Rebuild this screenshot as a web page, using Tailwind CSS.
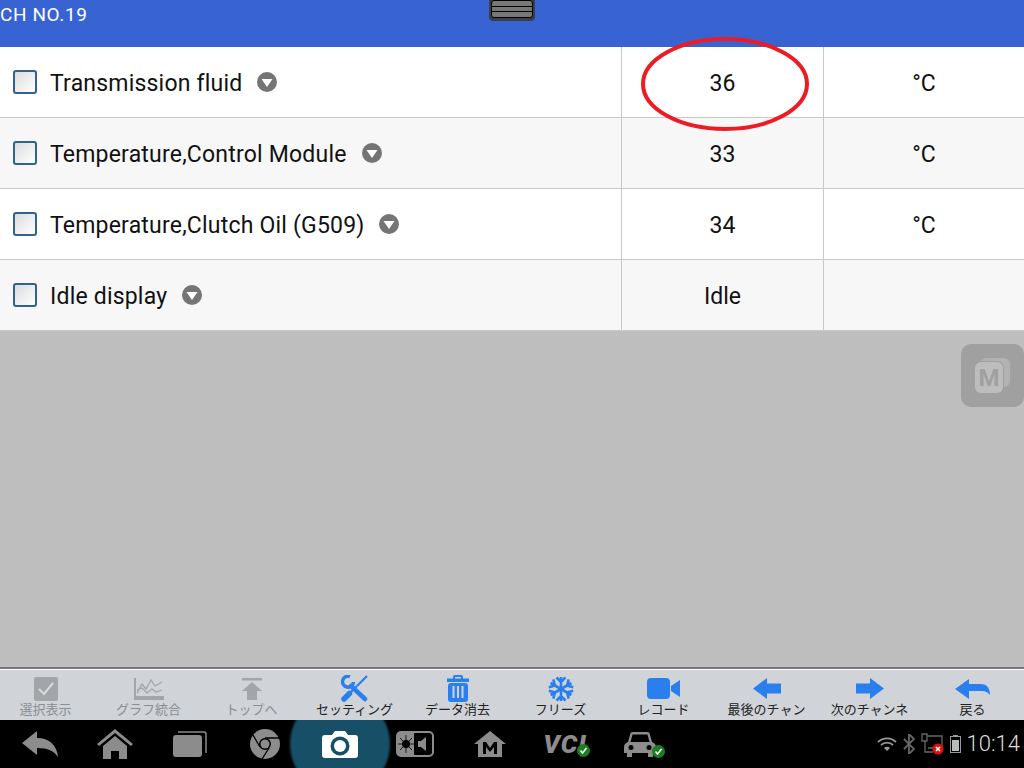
<!DOCTYPE html>
<html lang="en">
<head>
  <meta charset="UTF-8" />
  <title>CH NO.19</title>
  <script src="https://cdn.jsdelivr.net/npm/@tailwindcss/browser@4"></script>
</head>
<body class="w-[1024px] h-[768px] overflow-hidden bg-[#bebebe] font-['Roboto',sans-serif] relative flex flex-col">
  <!-- header -->
  <div class="h-[47px] bg-[#3763d3] text-white text-[19px] leading-[30px] tracking-[0.6px]">CH NO.19</div>

  <!-- rows -->
  <div class="text-[23px] text-[#111]">
    <div class="h-[71px] grid grid-cols-[622px_202px_200px] bg-white border-b border-[#c8c8c8]">
      <div class="flex items-center border-r border-[#c8c8c8] pl-[13px]">
        <span class="w-[24px] h-[24px] rounded-[3px] border-2 border-[#2f6391] bg-gradient-to-br from-[#dcdcdc] to-white"></span>
        <span class="ml-[13px] pt-[4px] tracking-[0.2px]">Transmission fluid</span>
        <svg class="ml-[15px]" width="20" height="20" viewBox="0 0 20 20"><circle cx="10" cy="10" r="10" fill="#757575"/><path d="M4.5 7h11L10 15z" fill="#fff"/></svg>
      </div>
      <div class="flex items-center justify-center border-r border-[#c8c8c8] pt-[4px]">36</div>
      <div class="flex items-center justify-center pt-[4px]">°C</div>
    </div>
    <div class="h-[71px] grid grid-cols-[622px_202px_200px] bg-[#f7f7f7] border-b border-[#c8c8c8]">
      <div class="flex items-center border-r border-[#c8c8c8] pl-[13px]">
        <span class="w-[24px] h-[24px] rounded-[3px] border-2 border-[#2f6391] bg-gradient-to-br from-[#dcdcdc] to-white"></span>
        <span class="ml-[13px] pt-[4px] tracking-[0.2px]">Temperature,Control Module</span>
        <svg class="ml-[15px]" width="20" height="20" viewBox="0 0 20 20"><circle cx="10" cy="10" r="10" fill="#757575"/><path d="M4.5 7h11L10 15z" fill="#fff"/></svg>
      </div>
      <div class="flex items-center justify-center border-r border-[#c8c8c8] pt-[4px]">33</div>
      <div class="flex items-center justify-center pt-[4px]">°C</div>
    </div>
    <div class="h-[71px] grid grid-cols-[622px_202px_200px] bg-white border-b border-[#c8c8c8]">
      <div class="flex items-center border-r border-[#c8c8c8] pl-[13px]">
        <span class="w-[24px] h-[24px] rounded-[3px] border-2 border-[#2f6391] bg-gradient-to-br from-[#dcdcdc] to-white"></span>
        <span class="ml-[13px] pt-[4px] tracking-[0.2px]">Temperature,Clutch Oil (G509)</span>
        <svg class="ml-[15px]" width="20" height="20" viewBox="0 0 20 20"><circle cx="10" cy="10" r="10" fill="#757575"/><path d="M4.5 7h11L10 15z" fill="#fff"/></svg>
      </div>
      <div class="flex items-center justify-center border-r border-[#c8c8c8] pt-[4px]">34</div>
      <div class="flex items-center justify-center pt-[4px]">°C</div>
    </div>
    <div class="h-[71px] grid grid-cols-[622px_202px_200px] bg-[#f7f7f7] border-b border-[#c8c8c8]">
      <div class="flex items-center border-r border-[#c8c8c8] pl-[13px]">
        <span class="w-[24px] h-[24px] rounded-[3px] border-2 border-[#2f6391] bg-gradient-to-br from-[#dcdcdc] to-white"></span>
        <span class="ml-[13px] pt-[4px] tracking-[0.2px]">Idle display</span>
        <svg class="ml-[15px]" width="20" height="20" viewBox="0 0 20 20"><circle cx="10" cy="10" r="10" fill="#757575"/><path d="M4.5 7h11L10 15z" fill="#fff"/></svg>
      </div>
      <div class="flex items-center justify-center border-r border-[#c8c8c8] pt-[4px]">Idle</div>
      <div></div>
    </div>
  </div>

  <div class="flex-1"></div>

  <!-- toolbar -->
  <div class="h-[53px] border-t-2 border-[#77777b] bg-[#d0d3d7] shadow-[inset_0_1px_0_#fff] grid grid-cols-[97px_repeat(9,103px)] pt-[6px] text-[13px] leading-[13px] font-['Noto_Sans_CJK_JP',sans-serif] text-[#222]">
    <div class="flex flex-col items-center pr-[6px] text-[#8b8e91]">
      <div class="h-[27px] flex items-center"><svg width="24" height="24" viewBox="0 0 24 24"><rect width="24" height="24" rx="2" fill="#a3a5a8"/><path d="M5 12l5 5 9-11" fill="none" stroke="#d8dadc" stroke-width="2"/></svg></div>
      <span>選択表示</span>
    </div>
    <div class="flex flex-col items-center text-[#8b8e91]">
      <div class="h-[27px] flex items-center"><svg width="30" height="22" viewBox="0 0 30 22"><path d="M0 0h2v18h28v4H0z" fill="#a3a5a8"/><path d="M3 15l5-9 4 5 5-9 4 6 7-4M3 12l5-2 5 5 5-4 4 3 6-2" fill="none" stroke="#a3a5a8" stroke-width="1.3"/></svg></div>
      <span>グラフ統合</span>
    </div>
    <div class="flex flex-col items-center text-[#8b8e91]">
      <div class="h-[27px] flex items-center"><svg width="20" height="22" viewBox="0 0 20 22"><path d="M0 0h20v2.500H0zM10 4l10 9h-5v9H5v-9H0z" fill="#a3a5a8"/></svg></div>
      <span>トップへ</span>
    </div>
    <div class="flex flex-col items-center">
      <div class="h-[27px] flex items-center"><svg width="27" height="27" viewBox="0 0 27 27"><path d="M9 1.500A5.500 5.500 0 1 0 12.500 7" fill="none" stroke="#2a7fee" stroke-width="3.500"/><path d="M10 11l14 13" stroke="#2a7fee" stroke-width="4.500" stroke-linecap="round"/><path d="M26 1L9 18" stroke="#2a7fee" stroke-width="2.200"/><path d="M8.500 18.500L3 24" stroke="#2a7fee" stroke-width="5.500" stroke-linecap="round"/></svg></div>
      <span>セッティング</span>
    </div>
    <div class="flex flex-col items-center">
      <div class="h-[27px] flex items-center"><svg width="24" height="27" viewBox="0 0 24 27"><path d="M7 3.500V2a2 2 0 0 1 2-2h6a2 2 0 0 1 2 2v1.500h6v3.500H1V3.500zM9 2v1.500h6V2z" fill="#2a7fee" fill-rule="evenodd"/><rect x="2" y="8" width="20" height="19" rx="3" fill="#2a7fee"/><path d="M7.500 11v12M12 11v12M16.500 11v12" stroke="#d0d3d7" stroke-width="2"/></svg></div>
      <span>データ消去</span>
    </div>
    <div class="flex flex-col items-center">
      <div class="h-[27px] flex items-center"><svg width="26" height="26" viewBox="0 0 26 26"><g stroke="#2a7fee" fill="none" stroke-width="2.600"><path d="M13 13V1M8.500 1.500L13 6l4.500-4.500"/><path d="M13 13V1M8.500 1.500L13 6l4.500-4.500" transform="rotate(60 13 13)"/><path d="M13 13V1M8.500 1.500L13 6l4.500-4.500" transform="rotate(120 13 13)"/><path d="M13 13V1M8.500 1.500L13 6l4.500-4.500" transform="rotate(180 13 13)"/><path d="M13 13V1M8.500 1.500L13 6l4.500-4.500" transform="rotate(240 13 13)"/><path d="M13 13V1M8.500 1.500L13 6l4.500-4.500" transform="rotate(300 13 13)"/></g></svg></div>
      <span>フリーズ</span>
    </div>
    <div class="flex flex-col items-center">
      <div class="h-[27px] flex items-center"><svg width="33" height="21" viewBox="0 0 33 21"><rect width="23" height="21" rx="4" fill="#2a7fee"/><path d="M24 8l9-6v17l-9-6z" fill="#2a7fee"/></svg></div>
      <span>レコード</span>
    </div>
    <div class="flex flex-col items-center">
      <div class="h-[27px] flex items-center"><svg width="28" height="21" viewBox="0 0 28 21"><path d="M14 0v5.500h14v10H14V21L0 10.500z" fill="#2a7fee"/></svg></div>
      <span>最後のチャン</span>
    </div>
    <div class="flex flex-col items-center">
      <div class="h-[27px] flex items-center"><svg width="28" height="21" viewBox="0 0 28 21"><path d="M14 0v5.500H0v10h14V21l14-10.500z" fill="#2a7fee"/></svg></div>
      <span>次のチャンネ</span>
    </div>
    <div class="flex flex-col items-center">
      <div class="h-[27px] flex items-center"><svg width="35" height="20" viewBox="0 0 35 20"><path d="M14 0v5h11c6 0 10 3 10 11-3-4-6-4-10-4H14v8L0 10z" fill="#2a7fee"/></svg></div>
      <span>戻る</span>
    </div>
  </div>

  <!-- android nav bar -->
  <div class="h-[48px] bg-black flex items-center relative overflow-hidden">
    <div class="absolute left-[290px] top-[-26px] w-[100px] h-[100px] rounded-full bg-[#164f66] blur-[1px]"></div>
    <div class="relative flex items-center">
      <div class="w-[80px] flex justify-center"><svg width="36" height="26" viewBox="0 0 36 26"><path d="M15 0v7c12 0 20 7 21 19-4-6-10-9-21-9v7L0 12z" fill="#8c8c8c"/></svg></div>
      <div class="w-[70px] flex justify-center"><svg width="36" height="30" viewBox="0 0 36 30"><path d="M18 0L36 15l-2 2L18 4 2 17l-2-2z" fill="#8c8c8c"/><path d="M18 7l12 10v13h-8v-8h-8v8H6V17z" fill="#8c8c8c"/></svg></div>
      <div class="w-[80px] flex justify-center"><svg width="34" height="26" viewBox="0 0 34 26"><rect y="4" width="29" height="22" rx="3" fill="#8c8c8c"/><path d="M5 1h26a2 2 0 0 1 2 2v19" fill="none" stroke="#8c8c8c" stroke-width="1.500"/></svg></div>
      <div class="w-[70px] flex justify-center"><svg width="30" height="30" viewBox="0 0 30 30"><circle cx="15" cy="15" r="15" fill="#8c8c8c"/><circle cx="15" cy="15" r="6" fill="#000"/><circle cx="15" cy="15" r="4.500" fill="#8c8c8c"/><path d="M15 9h14M10 18L3 6M19 19l-7 11" stroke="#000" stroke-width="1.300"/></svg></div>
      <div class="w-[80px] flex justify-center"><svg width="36" height="28" viewBox="0 0 36 28"><path d="M3 5h7l3-4h10l3 4h7a3 3 0 0 1 3 3v17a3 3 0 0 1-3 3H3a3 3 0 0 1-3-3V8a3 3 0 0 1 3-3z" fill="#fff"/><circle cx="18" cy="16" r="9.500" fill="#164f66"/><circle cx="18" cy="16" r="6" fill="#fff"/></svg></div>
      <div class="w-[70px] flex justify-center"><svg width="38" height="26" viewBox="0 0 38 26"><rect x="1" y="1" width="36" height="24" rx="4" fill="#000" stroke="#8c8c8c" stroke-width="2"/><path d="M5 1h13v24H5a4 4 0 0 1-4-4V5a4 4 0 0 1 4-4z" fill="#8c8c8c"/><path d="M10 4v18M2 13h16M4 7l12 12M16 7L4 19" stroke="#000" stroke-width="0.800"/><circle cx="10" cy="13" r="4" fill="#000"/><path d="M22 10h3l5-4v14l-5-4h-3z" fill="#8c8c8c"/></svg></div>
      <div class="w-[80px] flex justify-center"><svg width="32" height="26" viewBox="0 0 32 26"><path d="M16 0l16 13h-4v13H4V13H0z" fill="#8c8c8c"/><path d="M9 23V11h3l4 6 4-6h3v12h-3v-7l-4 5-4-5v7z" fill="#000"/></svg></div>
      <div class="w-[70px] relative flex justify-center font-['Roboto',sans-serif] font-black italic text-[26px] leading-none tracking-[1px] text-[#8c8c8c]">VCI
        <svg class="absolute left-[47px] bottom-[0px]" width="13" height="13" viewBox="0 0 13 13"><circle cx="6.500" cy="6.500" r="6.500" fill="#1c7d22"/><path d="M3.500 6.500l2 2.500 4-5" fill="none" stroke="#fff" stroke-width="1.500"/></svg>
      </div>
      <div class="w-[80px] relative flex justify-center">
        <svg width="32" height="25" viewBox="0 0 32 25"><path d="M6 3a3 3 0 0 1 3-3h14a3 3 0 0 1 3 3l2 7c2 1 4 2 4 5v6h-3v4h-5v-4H8v4H3v-4H0v-6c0-3 2-4 4-5z" fill="#8c8c8c"/><path d="M8.500 2.500h15l2 7.500h-19z" fill="#000"/><circle cx="7" cy="15.500" r="2.500" fill="#000"/><circle cx="25" cy="15.500" r="2.500" fill="#000"/></svg>
        <svg class="absolute left-[52px] bottom-[-1px]" width="13" height="13" viewBox="0 0 13 13"><circle cx="6.500" cy="6.500" r="6.500" fill="#1c7d22"/><path d="M3.500 6.500l2 2.500 4-5" fill="none" stroke="#fff" stroke-width="1.500"/></svg>
      </div>
    </div>
    <div class="ml-auto flex items-center gap-[6px] pr-[4px]">
      <svg width="20" height="14" viewBox="0 0 20 14"><path d="M1 5a13 13 0 0 1 18 0M4 8a9 9 0 0 1 12 0" fill="none" stroke="#999" stroke-width="1.800"/><path d="M7 11a4 4 0 0 1 6 0l-3 3z" fill="#999"/></svg>
      <svg width="12" height="20" viewBox="0 0 12 20"><path d="M1 5l10 10-5 5V0l5 5-10 10" fill="none" stroke="#666" stroke-width="1.800"/></svg>
      <svg width="23" height="22" viewBox="0 0 23 22"><path d="M6 3h15v12M1 1h5v7H1zM4 8v11h8M7 15h5" fill="none" stroke="#666" stroke-width="1.300"/><circle cx="17" cy="16" r="5.500" fill="#e01010"/><path d="M15 14l4 4m0-4l-4 4" stroke="#fff" stroke-width="1.500"/></svg>
      <svg width="11" height="18" viewBox="0 0 11 18"><rect x="0.500" y="1.500" width="10" height="16" fill="none" stroke="#999"/><rect x="2" y="5" width="7" height="11" fill="#bbb"/><rect x="3" width="5" height="1.500" fill="#999"/></svg>
      <span class="text-[22px] leading-none font-light text-[#ddd]">10:14</span>
    </div>
  </div>

  <!-- overlays -->
  <div class="absolute left-[489px] top-0 w-[46px] h-[21px] bg-[#3c3f4a] rounded-b-[4px] p-[2px] pt-0">
    <div class="h-[18px] bg-[#777] rounded-[3px] border border-black flex flex-col justify-evenly">
      <div class="h-px bg-black"></div>
      <div class="h-px bg-black"></div>
    </div>
  </div>
  <svg class="absolute left-[640px] top-[36px]" width="170" height="96" viewBox="0 0 170 96"><ellipse cx="85" cy="48" rx="82" ry="45" fill="none" stroke="#ed1c24" stroke-width="4"/></svg>
  <div class="absolute left-[961px] top-[344px] w-[63px] h-[63px] rounded-[10px] bg-[#a0a0a0]">
    <svg class="absolute left-[14px] top-[14px]" width="35" height="35" viewBox="0 0 35 35"><rect x="5" width="30" height="29" rx="6" fill="#b2b2b2"/><rect x="-1" y="3" width="30" height="33" rx="7" fill="#a0a0a0"/><rect y="4" width="28" height="31" rx="6" fill="#bdbdbd"/><text x="14" y="28" text-anchor="middle" font-family="Roboto" font-weight="700" font-size="24" fill="#a0a0a0">M</text></svg>
  </div>
</body>
</html>
